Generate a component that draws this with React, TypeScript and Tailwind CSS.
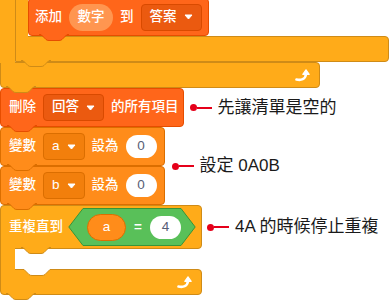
import React from "react"

const font = "font-['Liberation_Sans','Noto_Sans_CJK_TC',sans-serif]"

function Tab({ fill, stroke, className }: { fill: string; stroke: string; className: string }) {
  return (
    <svg width="30" height="8" viewBox="0 0 30 8" className={`absolute z-10 ${className}`}>
      <path d="M1.5 0 L7 5.5 Q8 6.5 10 6.5 H20 Q22 6.5 23 5.5 L28.5 0 Z" fill={fill} />
      <path d="M0 0.5 H2 L7 5.5 Q8 6.5 10 6.5 H20 Q22 6.5 23 5.5 L28 0.5 H30" fill="none" stroke={stroke} />
    </svg>
  )
}

function Caret() {
  return (
    <svg width="9" height="6" viewBox="0 0 9 6" className="shrink-0">
      <path d="M1 1 H8 L4.5 5 Z" fill="white" stroke="white" strokeLinejoin="round" />
    </svg>
  )
}

function LoopArrow() {
  return (
    <svg width="16" height="14" viewBox="0 0 16 14">
      <path d="M1.5 11.5 C6 12.5 10.5 11.5 11 6" fill="none" stroke="white" strokeWidth="2.6" strokeLinecap="round" />
      <path d="M7.8 6.3 L11 1.8 L14.2 6.3 Z" fill="white" stroke="white" strokeWidth="1.2" strokeLinejoin="round" />
    </svg>
  )
}

function Dropdown({ label, list }: { label: string; list?: boolean }) {
  return (
    <div
      className={
        list
          ? "shrink-0 h-[27px] flex items-center gap-[7px] px-[8px] rounded-[4px] border border-[#D94A00] bg-[#EB5A10]"
          : "shrink-0 h-[27px] flex items-center gap-[7px] px-[8px] rounded-[4px] border border-[#DB6E00] bg-[#F27F0C]"
      }
    >
      <span className="whitespace-nowrap">{label}</span>
      <Caret />
    </div>
  )
}

function NumberField({ value }: { value: string }) {
  return (
    <div className="shrink-0 h-[23px] w-[31px] rounded-full bg-white flex items-center justify-center text-[#575E75]">
      {value}
    </div>
  )
}

function Note({ text }: { text: string }) {
  return (
    <div className="flex items-center shrink-0">
      <span className="w-[7px] h-[7px] rounded-full bg-[#E5001A]" />
      <span className="w-[15px] h-[2px] bg-[#E5001A]" />
      <span className="ml-[6px] text-[17px] font-normal text-[#1a1a1a] whitespace-nowrap">{text}</span>
    </div>
  )
}

function VarBlock({ name }: { name: string }) {
  return (
    <div className="relative h-[39px] flex items-center gap-[7px] pl-[8px] pr-[7px] bg-[#FF8C1A] border border-[#DB6E00] rounded-[4px] whitespace-nowrap">
      <span>變數</span>
      <Dropdown label={name} />
      <span>設為</span>
      <NumberField value="0" />
      <Tab fill="#FF8C1A" stroke="#DB6E00" className="left-[6px] bottom-[-7px]" />
    </div>
  )
}

export default function App() {
  return (
    <div className={`w-[392px] h-[303px] overflow-hidden bg-white text-white text-[13.5px] font-medium ${font}`}>
      <div className="flex flex-col items-start -mt-[2px]">
        {/* repeat loop coming in from above */}
        <div className="flex">
          <div className="relative z-[1] w-[15px] -mb-px bg-[#FFAB19]" />
          <div className="flex flex-col">
            <div className="flex">
              <div className="relative z-[1] w-[13px] -mb-px bg-[#FFAB19] border-l border-[#CF8B17]" />
              <div className="relative h-[38px] flex items-center gap-[7px] px-[6px] bg-[#FF661A] border border-[#E64D00] rounded-[4px] whitespace-nowrap">
                <span>添加</span>
                <div className="h-[27px] w-[44px] rounded-full bg-[#FF9650] flex items-center justify-center">數字</div>
                <span>到</span>
                <Dropdown label="答案" list />
                <Tab fill="#FF661A" stroke="#E64D00" className="left-[10px] bottom-[-7px]" />
              </div>
            </div>
            <div className="relative w-[374px] h-[26px] bg-[#FFAB19] border border-[#CF8B17] rounded-r-[4px]">
              <Tab fill="#FFAB19" stroke="#CF8B17" className="left-[5px] bottom-[-7px]" />
            </div>
          </div>
        </div>
        <div className="relative w-[320px] h-[26px] flex items-center justify-end pr-[8px] bg-[#FFAB19] border border-[#CF8B17] rounded-r-[4px] rounded-bl-[4px]">
          <LoopArrow />
          <Tab fill="#FFAB19" stroke="#CF8B17" className="left-[5px] bottom-[-7px]" />
        </div>

        {/* clear list */}
        <div className="flex items-center gap-[6px]">
          <div className="relative h-[39px] flex items-center gap-[7px] pl-[8px] pr-[4px] bg-[#FF661A] border border-[#E64D00] rounded-[4px] whitespace-nowrap">
            <span>刪除</span>
            <Dropdown label="回答" list />
            <span>的所有項目</span>
            <Tab fill="#FF661A" stroke="#E64D00" className="left-[6px] bottom-[-7px]" />
          </div>
          <Note text="先讓清單是空的" />
        </div>

        {/* set variables */}
        <div className="flex items-center gap-[7px]">
          <div className="flex flex-col">
            <VarBlock name="a" />
            <VarBlock name="b" />
          </div>
          <Note text="設定 0A0B" />
        </div>

        {/* repeat until */}
        <div className="flex items-center gap-[5px]">
          <div className="relative h-[44px] w-[202px] flex items-center gap-[5px] pl-[8px] bg-[#FFAB19] border border-[#CF8B17] rounded-t-[4px] rounded-br-[4px] whitespace-nowrap">
            <span>重複直到</span>
            <div className="relative shrink-0 h-[38px] w-[128px] flex items-center gap-[8px] pl-[19px]">
              <svg width="128" height="38" viewBox="0 0 128 38" className="absolute left-0 top-0">
                <path d="M0.8 19 L15 0.5 H113 L127.2 19 L113 37.5 H15 Z" fill="#59C059" stroke="#389438" strokeLinejoin="round" />
              </svg>
              <div className="relative h-[27px] w-[39px] rounded-full bg-[#FF8C1A] border border-[#DB6E00] flex items-center justify-center">a</div>
              <span className="relative font-bold">=</span>
              <div className="relative">
                <NumberField value="4" />
              </div>
            </div>
            <Tab fill="#FFAB19" stroke="#CF8B17" className="left-[20px] bottom-[-7px]" />
          </div>
          <Note text="4A 的時候停止重複" />
        </div>
        <div className="relative z-[1] w-[15px] h-[22px] -my-px bg-[#FFAB19] border-l border-[#CF8B17]" />
        <div className="relative w-[202px] h-[26px] flex items-center justify-end pr-[8px] bg-[#FFAB19] border border-[#CF8B17] rounded-r-[4px] rounded-bl-[4px]">
          <Tab fill="#FFFFFF" stroke="#CF8B17" className="left-[21px] top-[-1px]" />
          <LoopArrow />
          <Tab fill="#FFAB19" stroke="#CF8B17" className="left-[5px] bottom-[-7px]" />
        </div>
      </div>
    </div>
  )
}
